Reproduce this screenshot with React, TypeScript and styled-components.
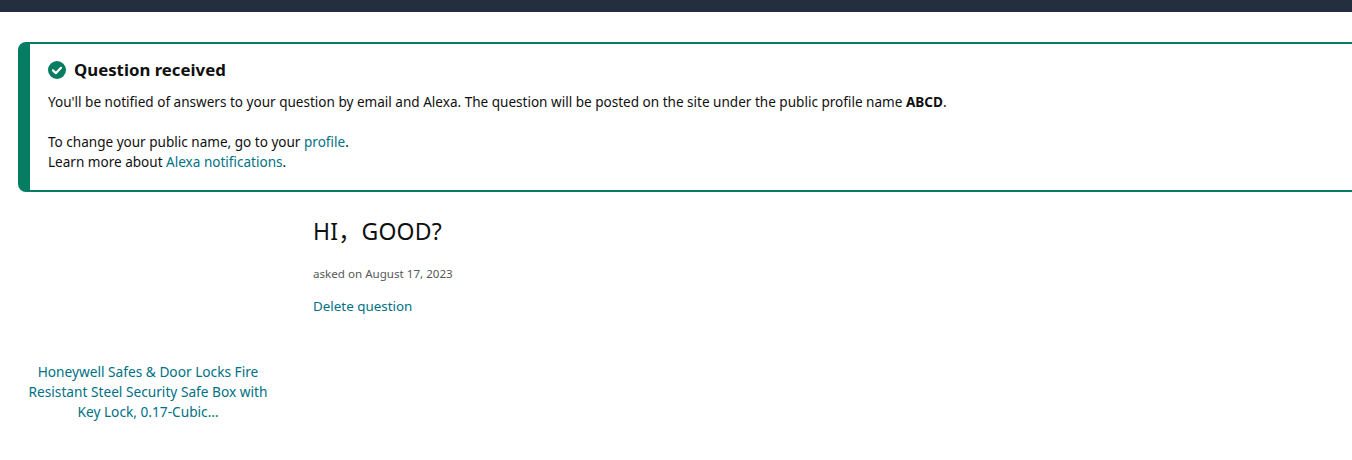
import React from "react";
import styled, { createGlobalStyle } from "styled-components";

const GlobalStyle = createGlobalStyle`
  html, body {
    margin: 0;
    padding: 0;
    background: #fff;
    overflow: hidden;
  }
  body {
    font-family: "Noto Sans", "Noto Sans CJK SC", "Liberation Sans", Arial, sans-serif;
    font-size: 13.55px;
    line-height: 20px;
    color: #0f1111;
  }
`;

const Page = styled.div`
  width: 1352px;
  height: 460px;
  overflow: hidden;
`;

const TopBar = styled.div`
  height: 12px;
  background: #232f3e;
`;

const Content = styled.div`
  padding: 30px 0 0 18px;
`;

const Alert = styled.div`
  width: 1400px;
  box-sizing: border-box;
  height: 150px;
  border: 2px solid #067d62;
  border-left-width: 12px;
  border-radius: 8px;
  padding: 14px 18px;
`;

const AlertHeading = styled.h4`
  display: flex;
  align-items: center;
  gap: 8px;
  margin: 0 0 10px;
  font-size: 16.8px;
  line-height: 24px;
  font-weight: 700;
`;

const Line = styled.p`
  margin: 0;
`;

const Gap = styled.div`
  height: 20px;
`;

const Link = styled.a`
  color: #007185;
  text-decoration: none;
`;

const Details = styled.div`
  display: flex;
  margin-top: 19px;
`;

const Product = styled.div`
  width: 260px;
  margin-right: 35px;
  box-sizing: border-box;
  padding: 151px 8px 0;
  text-align: center;
  font-size: 13.7px;
  line-height: 20px;
`;

const Question = styled.div`
  display: flex;
  flex-direction: column;
  align-items: flex-start;
  font-size: 13.4px;
`;

const Title = styled.h1`
  margin: 0 0 13px;
  font-size: 23px;
  line-height: 40px;
  font-weight: 400;
  letter-spacing: 0.2px;
`;

const AskedOn = styled.div`
  font-size: 11.6px;
  line-height: 20px;
  color: #565959;
  margin-bottom: 12px;
`;

function CheckCircle() {
  return (
    <svg width="18" height="18" viewBox="0 0 18 18" aria-hidden="true">
      <circle cx="9" cy="9" r="9" fill="#067d62" />
      <path d="M5 9.4l2.8 2.8L13 6.8" fill="none" stroke="#fff" strokeWidth="2.2" strokeLinecap="round" strokeLinejoin="round" />
    </svg>
  );
}

export default function App() {
  return (
    <Page>
      <GlobalStyle />
      <TopBar />
      <Content>
        <Alert>
          <AlertHeading>
            <CheckCircle />
            Question received
          </AlertHeading>
          <Line>
            You'll be notified of answers to your question by email and Alexa. The question will be posted on the site under the public profile name <b>ABCD</b>.
          </Line>
          <Gap />
          <Line>
            To change your public name, go to your <Link href="#">profile</Link>.
          </Line>
          <Line>
            Learn more about <Link href="#">Alexa notifications</Link>.
          </Line>
        </Alert>
        <Details>
          <Product>
            <Link href="#">Honeywell Safes &amp; Door Locks Fire Resistant Steel Security Safe Box with Key Lock, 0.17-Cubic…</Link>
          </Product>
          <Question>
            <Title>HI，GOOD?</Title>
            <AskedOn>asked on August 17, 2023</AskedOn>
            <Link href="#">Delete question</Link>
          </Question>
        </Details>
      </Content>
    </Page>
  );
}
